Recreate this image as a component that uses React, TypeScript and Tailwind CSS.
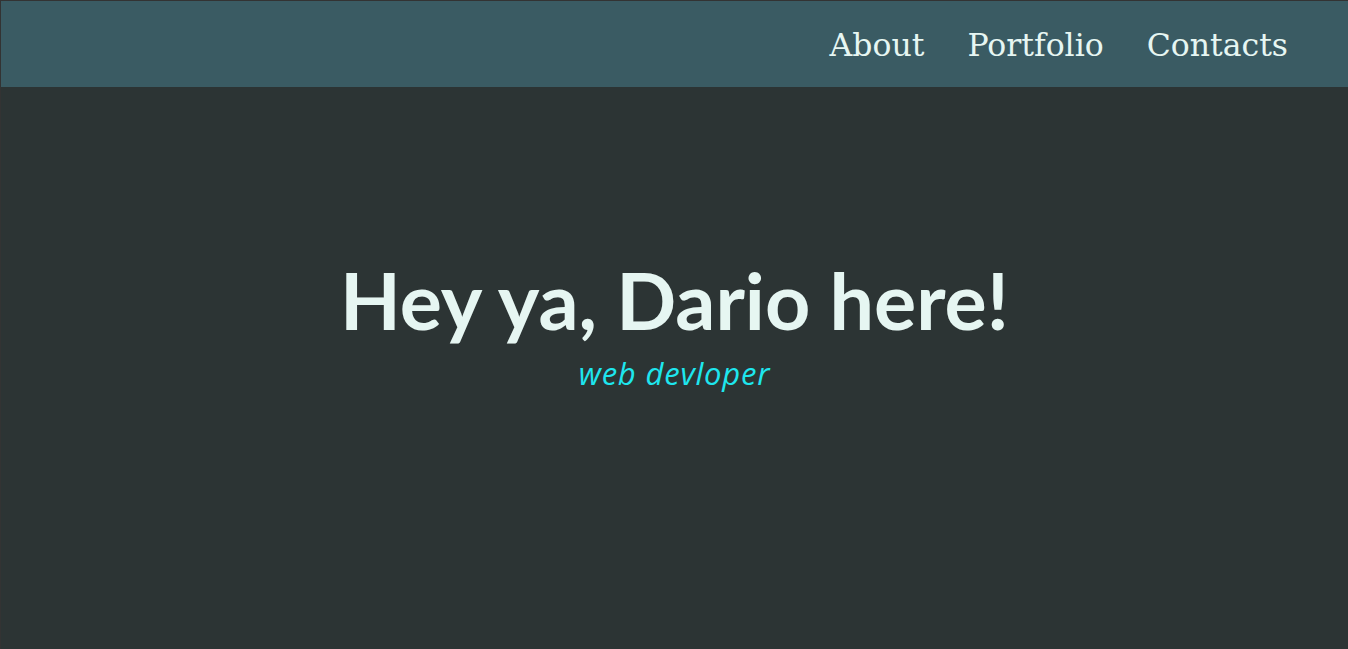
export default function App() {
  const links = ["About", "Portfolio", "Contacts"];

  return (
    <div className="h-[649px] w-full flex flex-col bg-[#2c3434] border-t border-l border-[#333333]">
      <header className="h-[86px] shrink-0 bg-[#3a5b63] flex items-center justify-end pr-[60px] pt-[3px]">
        <nav className="flex gap-[43px]">
          {links.map((link) => (
            <a
              key={link}
              href="#"
              className="text-[#e6f6f2] text-[31.5px] leading-none font-['DejaVu_Serif',serif]"
            >
              {link}
            </a>
          ))}
        </nav>
      </header>
      <main className="flex-1 flex flex-col items-center pt-[173px]">
        <h1 className="text-[#e6f6f2] text-[79px] leading-none font-bold font-['Lato',sans-serif]">
          Hey ya, Dario here!
        </h1>
        <p className="mt-[11px] text-[#1ee6ee] text-[31px] tracking-[0.8px] italic font-normal font-['Open_Sans',sans-serif]">
          web devloper
        </p>
      </main>
    </div>
  );
}
